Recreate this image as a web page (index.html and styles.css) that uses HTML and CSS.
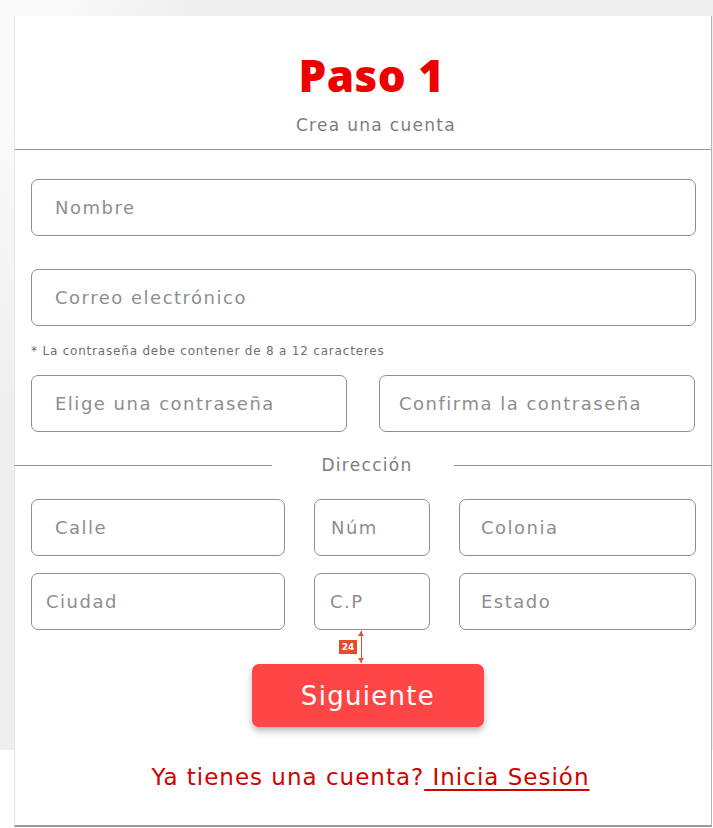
FILE: index.html
```html
<!DOCTYPE html>
<html lang="es">
<head>
<meta charset="utf-8">
<title>Paso 1 - Crea una cuenta</title>
<link rel="stylesheet" href="styles.css">
</head>
<body>
<div class="card">
  <header class="head">
    <h1 class="title">Paso 1</h1>
    <p class="subtitle">Crea una cuenta</p>
  </header>
  <form class="form">
    <input class="field" type="text" placeholder="Nombre">
    <input class="field gap-top" type="email" placeholder="Correo electrónico">
    <p class="note">* La contraseña debe contener de 8 a 12 caracteres</p>
    <div class="row2">
      <input class="field" type="password" placeholder="Elige una contraseña">
      <input class="field p19" type="password" placeholder="Confirma la contraseña">
    </div>
    <div class="divider">
      <span class="line"></span>
      <span class="divider-text">Dirección</span>
      <span class="line"></span>
    </div>
    <div class="grid3">
      <input class="field" type="text" placeholder="Calle">
      <input class="field p16" type="text" placeholder="Núm">
      <input class="field p21" type="text" placeholder="Colonia">
      <input class="field p14" type="text" placeholder="Ciudad">
      <input class="field p15" type="text" placeholder="C.P">
      <input class="field p21" type="text" placeholder="Estado">
    </div>
    <button class="btn" type="button">Siguiente</button>
    <p class="foot">Ya tienes una cuenta?<a class="link" href="#"> Inicia Sesión</a></p>
  </form>
  <div class="measure">
    <span class="badge">24</span>
    <span class="arrow"></span>
  </div>
</div>
</body>
</html>
```

FILE: styles.css
```css
html, body {
  margin: 0;
  padding: 0;
}
body {
  width: 713px;
  height: 828px;
  overflow: hidden;
  background:
    linear-gradient(115deg, rgba(255,255,255,0.7) 0 6%, rgba(255,255,255,0) 18%),
    linear-gradient(to bottom, #efefef 0 750px, #ffffff 750px);
  font-family: "DejaVu Sans", "Noto Sans", sans-serif;
}
.card {
  position: relative;
  box-sizing: border-box;
  margin: 16px 0 0 14px;
  width: 698px;
  height: 811px;
  background: #ffffff;
  border-left: 1px solid #e6e6e6;
  border-right: 1px solid #b5b5b5;
  border-bottom: 2px solid #9c9c9c;
}
.head {
  padding: 31px 0 14px;
  border-bottom: 1px solid #949494;
  text-align: center;
}
.title {
  margin: 0;
  font-family: "Open Sans", "Liberation Sans", sans-serif;
  font-weight: 800;
  font-size: 44px;
  line-height: 56px;
  color: #ee0000;
  letter-spacing: 0.5px;
  padding-left: 17px;
}
.subtitle {
  margin: 12px 0 0;
  font-size: 17px;
  line-height: 20px;
  letter-spacing: 1.3px;
  color: #7d7d7d;
  padding-left: 26px;
}
.form {
  padding: 29px 15px 0 16px;
  display: flex;
  flex-direction: column;
}
.field {
  box-sizing: border-box;
  display: block;
  width: 100%;
  height: 57px;
  margin: 0;
  padding: 0 0 0 23px;
  border: 1px solid #8f8f8f;
  border-radius: 7px;
  background: #fff;
  font-family: "DejaVu Sans", "Noto Sans", sans-serif;
  font-size: 18px;
  letter-spacing: 1.5px;
  color: #555;
  outline: none;
}
.field::placeholder {
  color: #8e8e8e;
  opacity: 1;
}
.p14 { padding-left: 14px; }
.p15 { padding-left: 15px; }
.p16 { padding-left: 16px; }
.p19 { padding-left: 19px; }
.p21 { padding-left: 21px; }
.gap-top { margin-top: 33px; }
.note {
  margin: 17px 0 16px;
  font-size: 12px;
  line-height: 16px;
  letter-spacing: 0.8px;
  color: #6f6f6f;
}
.row2 {
  display: grid;
  grid-template-columns: 316px 316px;
  column-gap: 32px;
}
.divider {
  display: flex;
  align-items: center;
  margin: 23px -16px 24px -17px;
  height: 20px;
}
.line {
  flex: 1;
  height: 1px;
  background: #949494;
}
.divider-text {
  width: 182px;
  box-sizing: border-box;
  padding-left: 8px;
  text-align: center;
  font-size: 17px;
  line-height: 20px;
  letter-spacing: 1.3px;
  color: #7d7d7d;
}
.grid3 {
  display: grid;
  grid-template-columns: 254px 116px 1fr;
  column-gap: 29px;
  row-gap: 17px;
}
.btn {
  align-self: flex-start;
  margin: 34px 0 0 221px;
  width: 232px;
  height: 63px;
  border: none;
  border-radius: 7px;
  background: #ff4646;
  color: #ffffff;
  font-family: "DejaVu Sans", "Noto Sans", sans-serif;
  font-size: 26px;
  letter-spacing: 1.3px;
  box-shadow: 0 4px 7px rgba(0, 0, 0, 0.28);
  padding: 0;
}
.foot {
  margin: 36px 0 0;
  padding-left: 14px;
  text-align: center;
  font-size: 23px;
  line-height: 28px;
  letter-spacing: 1px;
  color: #d10000;
}
.link {
  color: #d10000;
  text-decoration: underline;
  text-underline-offset: 4px;
  text-decoration-thickness: 2px;
}
.measure {
  position: absolute;
  left: 324px;
  top: 614px;
  width: 26px;
  height: 34px;
}
.badge {
  position: absolute;
  left: 0;
  top: 10px;
  width: 18px;
  height: 14px;
  background: #e84a2a;
  color: #fff;
  font-family: "DejaVu Sans", sans-serif;
  font-size: 9px;
  font-weight: 700;
  line-height: 14px;
  text-align: center;
}
.arrow {
  position: absolute;
  left: 22px;
  top: 1px;
  width: 1px;
  height: 32px;
  background: #e0552f;
}
.arrow::before,
.arrow::after {
  content: "";
  position: absolute;
  left: -3px;
  width: 0;
  height: 0;
  border-left: 3.5px solid transparent;
  border-right: 3.5px solid transparent;
}
.arrow::before {
  top: 0;
  border-bottom: 5px solid #e0552f;
}
.arrow::after {
  bottom: 0;
  border-top: 5px solid #e0552f;
}
```
